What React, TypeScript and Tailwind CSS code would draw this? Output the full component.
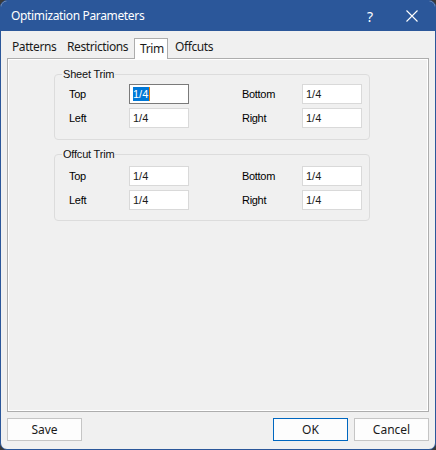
import React from "react";

const ui = { fontFamily: '"Noto Sans", "Open Sans", sans-serif' };
const ms = { fontFamily: '"Liberation Sans", Arial, sans-serif' };

function Field({ value, focused }: { value: string; focused?: boolean }) {
  return (
    <div
      className={`w-[60px] h-[20px] bg-white border flex items-center pl-[3px] text-[11px] text-[#1b1b1b] ${
        focused ? "border-[#7a7a7a]" : "border-[#d9d9d9]"
      }`}
      style={ms}
    >
      {focused ? (
        <span className="bg-[#0078d7] text-white pr-[1px] leading-[14px] border-r border-[#f08000]">{value}</span>
      ) : (
        <span>{value}</span>
      )}
    </div>
  );
}

function Row({ l, r, focused }: { l: string; r: string; focused?: boolean }) {
  return (
    <div className="flex items-center h-[20px]">
      <span className="w-[74px] pl-[14px] text-[11px] text-black tracking-[-0.3px]" style={ms}>
        {l}
      </span>
      <Field value="1/4" focused={focused} />
      <span className="w-[113px] pl-[53px] text-[11px] text-black tracking-[-0.3px]" style={ms}>
        {r}
      </span>
      <Field value="1/4" />
    </div>
  );
}

function Group({ title, first, pt, pb }: { title: string; first?: boolean; pt: string; pb: string }) {
  return (
    <fieldset className={`w-[316px] border border-[#dcdcdc] rounded-[4px] ${pb}`}>
      <legend className="ml-[7px] px-[1px] text-[11px] text-[#111] tracking-[-0.2px] leading-[13px]" style={ms}>
        {title}
      </legend>
      <div className={`flex flex-col gap-[4px] ${pt}`}>
        <Row l="Top" r="Bottom" focused={first} />
        <Row l="Left" r="Right" />
      </div>
    </fieldset>
  );
}

export default function App() {
  return (
    <div className="w-[436px] h-[450px] bg-[#3a3a3a]">
      <div className="w-[436px] h-[450px] bg-[#f0f0f0] border border-[#2b579a] rounded-[7px] overflow-hidden flex flex-col">
        <div className="h-[30px] shrink-0 bg-[#2b579a] flex items-center text-white" style={ui}>
          <span className="pl-[10px] text-[12px] tracking-[-0.35px] flex-1">Optimization Parameters</span>
          <span className="text-[14px] w-[20px] text-center mr-[26px]">?</span>
          <svg width="12" height="12" viewBox="0 0 12 12" className="mr-[17px]">
            <path d="M0.5 0.5 L11.5 11.5 M11.5 0.5 L0.5 11.5" stroke="white" strokeWidth="1.1" />
          </svg>
        </div>
        <div
          className="h-[27px] shrink-0 flex items-end pl-[6px] text-[12px] text-[#1a1a1a] tracking-[-0.4px]"
          style={ui}
        >
          <div className="w-[55px] h-[20px] pl-[5px] leading-[18px]">Patterns</div>
          <div className="w-[72px] h-[20px] pl-[5px] leading-[18px]">Restrictions</div>
          <div className="w-[34px] h-[21px] -mb-[1px] relative z-10 bg-white border border-b-0 border-[#adadad] pl-[5px] leading-[20px]">
            Trim
          </div>
          <div className="w-[60px] h-[20px] pl-[7px] leading-[18px]">Offcuts</div>
        </div>
        <div className="mx-[6px] h-[354px] shrink-0 border border-[#adadad] shadow-[inset_1px_1px_0_#ffffff,inset_-1px_-1px_0_#ffffff] pt-[9px] pl-[46px] flex flex-col gap-[8px]">
          <Group title="Sheet Trim" first pt="pt-[3px]" pb="pb-[11px]" />
          <Group title="Offcut Trim" pt="pt-[5px]" pb="pb-[10px]" />
        </div>
        <div className="flex-1 flex items-start pt-[6px] px-[6px] text-[12px] text-[#1a1a1a]" style={ui}>
          <button className="w-[75px] h-[23px] bg-[#fdfdfd] border border-[#c5c5c5] flex items-center justify-center">
            Save
          </button>
          <div className="flex-1" />
          <button className="w-[75px] h-[23px] bg-[#fdfdfd] border border-[#0067c0] flex items-center justify-center">
            OK
          </button>
          <button className="w-[75px] h-[23px] ml-[6px] bg-[#fdfdfd] border border-[#c5c5c5] flex items-center justify-center">
            Cancel
          </button>
        </div>
      </div>
    </div>
  );
}
